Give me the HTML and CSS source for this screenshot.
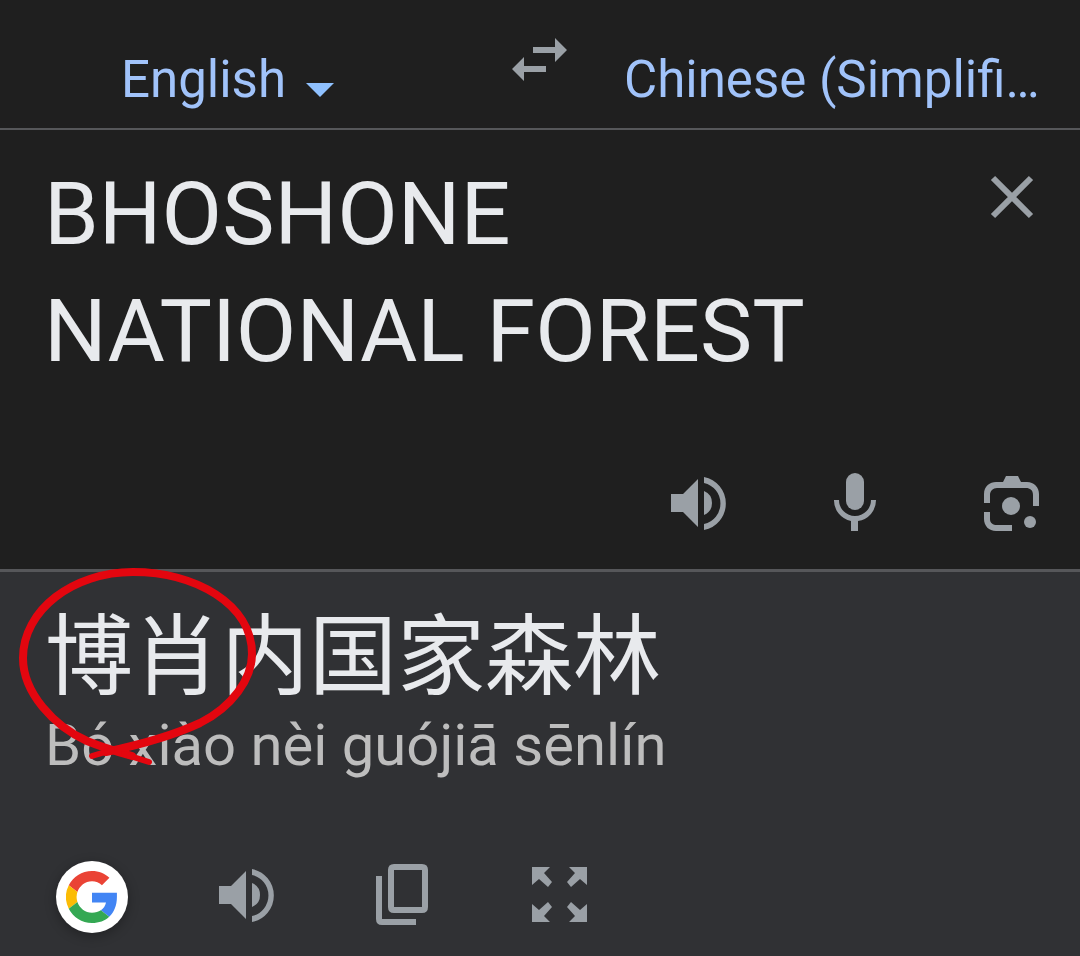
FILE: index.html
```html
<!DOCTYPE html>
<html lang="en">
<head>
<meta charset="utf-8">
<meta name="viewport" content="width=device-width, initial-scale=1">
<title>Translate</title>
<link rel="stylesheet" href="styles.css">
</head>
<body>
<main class="translator">
  <header class="languages">
    <div class="language-from">
      <select class="language-select source-select" aria-label="Source language">
        <option>English</option>
      </select>
      <svg class="caret" viewBox="0 0 28 14" aria-hidden="true"><path d="M0 0h28L14 14z"/></svg>
    </div>
    <button class="icon-button swap" type="button" aria-label="Swap languages">
      <svg viewBox="0 0 56 44" width="56" height="44"><path d="M43 0l12 12-12 12v-9H21V9h22zM12 19v9h22v6H12v9L0 31z"/></svg>
    </button>
    <div class="language-to">
      <select class="language-select target-select" aria-label="Target language">
        <option>Chinese (Simplified)</option>
      </select>
    </div>
  </header>

  <section class="source" aria-label="Source text">
    <div class="source-entry">
      <textarea class="source-text" rows="2" aria-label="Text to translate" spellcheck="false">BHOSHONE
NATIONAL FOREST</textarea>
      <button class="icon-button" type="button" aria-label="Clear text">
        <svg viewBox="0 0 44 44" width="44" height="44"><path class="stroke" d="M3 3l38 38M41 3L3 41"/></svg>
      </button>
    </div>
    <div class="source-tools">
      <button class="icon-button" type="button" aria-label="Listen to source">
        <svg viewBox="0 0 56 60" width="56" height="60"><path d="M1 21h12l15-15v48L13 39H1zM34 18a13 13 0 0 1 0 24zM34 4a27 27 0 0 1 0 53v-6a21 21 0 0 0 0-41z"/></svg>
      </button>
      <button class="icon-button" type="button" aria-label="Speak">
        <svg viewBox="0 0 44 60" width="44" height="60"><rect x="13" y="0" width="18" height="37" rx="9"/><path d="M1 27h5a16 16 0 0 0 32 0h5a21 21 0 0 1-18 21v10h-7V48A21 21 0 0 1 1 27z"/></svg>
      </button>
      <button class="icon-button" type="button" aria-label="Search with camera">
        <svg viewBox="0 0 56 60" width="56" height="60"><path d="M0 30V21C0 13 6 9 12 9h7l3-6h12l3 6h6c7 0 12 5 12 12v12h-6V22c0-5-3-7-7-7H13c-4 0-7 3-7 7v8zM0 39h6v7c0 4 3 6 7 6h15v6H12C5 58 0 53 0 46z"/><circle cx="27" cy="33" r="9"/><circle cx="46" cy="49" r="6"/></svg>
      </button>
    </div>
  </section>

  <section class="result" aria-label="Translation">
    <p class="translation" lang="zh-CN">博肖内国家森林</p>
    <p class="pronunciation" lang="zh-Latn">Bó xiào nèi guójiā sēnlín</p>
    <div class="result-tools">
      <button class="google-button" type="button" aria-label="Search on Google">
        <svg viewBox="0 0 48 48" width="52" height="52"><path fill="#EA4335" d="M24 9.500c3.540 0 6.710 1.220 9.210 3.600l6.850-6.850C35.900 2.380 30.470 0 24 0 14.620 0 6.510 5.380 2.560 13.220l7.980 6.190C12.430 13.720 17.740 9.500 24 9.500z"/><path fill="#4285F4" d="M47 24V20H24v9.020h12.940c-.58 2.960-2.260 5.480-4.780 7.180l7.730 6C44.400 38 47 31.800 47 24z"/><path fill="#FBBC05" d="M10.530 28.590a14.500 14.500 0 0 1 0-9.180l-7.980-6.190a24 24 0 0 0 0 21.560z"/><path fill="#34A853" d="M24 48c6.480 0 11.930-2.130 15.890-5.810l-7.730-6c-2.150 1.450-4.920 2.300-8.160 2.300-6.260 0-11.570-4.220-13.470-9.910l-7.980 6.190C6.510 42.620 14.620 48 24 48z"/></svg>
      </button>
      <button class="icon-button" type="button" aria-label="Listen to translation">
        <svg viewBox="0 0 56 60" width="56" height="60"><path d="M1 21h12l15-15v48L13 39H1zM34 18a13 13 0 0 1 0 24zM34 4a27 27 0 0 1 0 53v-6a21 21 0 0 0 0-41z"/></svg>
      </button>
      <button class="icon-button copy" type="button" aria-label="Copy translation">
        <svg viewBox="0 0 54 62" width="54" height="62"><path fill-rule="evenodd" d="M18 0h28q6 0 6 6v37q0 6-6 6H18q-6 0-6-6V6q0-6 6-6zm0 6v37h28V6zM0 12h6v43h34v6H6q-6 0-6-6z"/></svg>
      </button>
      <button class="icon-button" type="button" aria-label="Full screen">
        <svg viewBox="0 0 56 56" width="56" height="56"><path d="M0 0h18l-6 6 8 9-4 5-9-8-7 6zM55 0H37l6 6-8 9 4 5 9-8 7 6zM0 55h18l-6-6 8-9-4-5-9 8-7-6zM55 55H37l6-6-8-9 4-5 9 8 7-6z"/></svg>
      </button>
    </div>
    <svg class="annotation" viewBox="0 0 260 210" width="260" height="210" aria-hidden="true">
      <path class="ink" d="M106 192C134 186 172 176 200 163C232 147 252 119 252 94C252 44 195 12 133 12C73 12 23 50 23 98C23 133 54 166 87 181C104 188 118 192 132 196"/>
      <path class="ink-tail" d="M92 196L112 190M124 194L149 202"/>
    </svg>
  </section>
</main>
</body>
</html>
```
FILE: styles.css
```css
* {
  box-sizing: border-box;
}

body {
  margin: 0;
  background: #303134;
  color: #e8eaed;
  font-family: Roboto, "Noto Sans CJK SC", sans-serif;
}

.translator {
  display: flex;
  flex-direction: column;
  min-height: 100vh;
}

.languages {
  display: grid;
  grid-template-columns: 1fr 56px 1fr;
  padding: 38px 34px 17px 44px;
  background: #1f1f1f;
  border-bottom: 2px solid #56575a;
}

.language-from {
  display: flex;
  align-items: center;
  justify-content: center;
  gap: 19px;
  padding: 9px 106px 0 0;
}

.language-to {
  display: flex;
  min-width: 0;
  padding: 9px 0 0 51px;
}

.swap {
  align-self: start;
  justify-self: center;
}

.languages .swap {
  margin-left: -10px;
}

.language-select {
  appearance: none;
  min-width: 0;
  height: 64px;
  padding: 0;
  border: 0;
  background: transparent;
  color: #a1c3fa;
  font-family: inherit;
  font-size: 51px;
  text-overflow: ellipsis;
}

.target-select {
  width: 100%;
}

.caret {
  width: 28px;
  height: 14px;
  margin-top: 22px;
  fill: #8fc1ff;
}

.icon-button,
.google-button {
  display: flex;
  flex: none;
  align-items: center;
  justify-content: center;
  padding: 0;
  border: 0;
  background: transparent;
}

.icon-button svg {
  fill: #9aa0a6;
}

.icon-button .stroke {
  fill: none;
  stroke: #9aa0a6;
  stroke-width: 6px;
}

.source {
  padding: 25px 40px 36px 44px;
  background: #1f1f1f;
}

.source-entry {
  display: flex;
  align-items: flex-start;
  gap: 24px;
  padding-right: 6px;
}

.source-entry .icon-button {
  margin-top: 20px;
}

.source-text {
  display: block;
  flex: 1;
  min-width: 0;
  height: 234px;
  padding: 0;
  border: 0;
  overflow: hidden;
  resize: none;
  background: transparent;
  color: inherit;
  font-family: inherit;
  font-size: 88px;
  line-height: 117px;
}

.source-tools {
  display: flex;
  justify-content: flex-end;
  gap: 107px;
  margin-top: 84px;
}

.result {
  position: relative;
  flex: 1;
  padding: 17px 45px;
  border-top: 3px solid #56575a;
}

.translation {
  margin: 0;
  font-family: "Noto Sans CJK SC", sans-serif;
  font-size: 88px;
  line-height: 120px;
}

.pronunciation {
  margin: 0;
  color: #bdbdbd;
  font-size: 58px;
  line-height: 72px;
}

.result-tools {
  display: flex;
  align-items: center;
  gap: 102px;
  margin-top: 76px;
  padding-left: 11px;
}

.google-button {
  width: 72px;
  height: 72px;
  margin: 4px -12px 0 0;
  border-radius: 50%;
  background: #ffffff;
  box-shadow: 0 3px 12px rgb(0 0 0 / 30%);
}

.annotation {
  position: absolute;
  top: -12px;
  left: 0;
  fill: none;
  stroke: #e3060f;
  stroke-linecap: round;
  pointer-events: none;
}

.ink {
  stroke-width: 8px;
}

.ink-tail {
  stroke-width: 6px;
}
```
